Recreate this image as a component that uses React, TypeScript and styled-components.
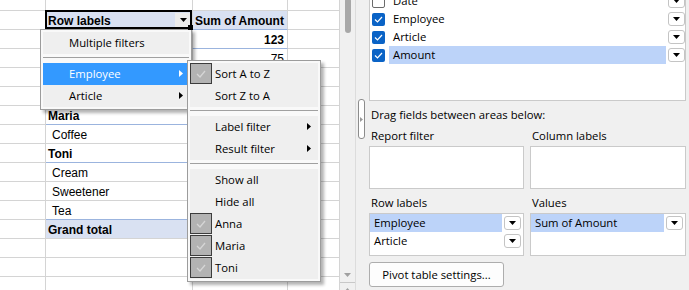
import React from 'react';
import styled, { createGlobalStyle, css } from 'styled-components';

const uiFont = `"Open Sans", "Noto Sans", sans-serif`;
const sheetFont = `"Liberation Sans", Arial, sans-serif`;

const Global = createGlobalStyle`
  html, body { margin: 0; padding: 0; }
  body { width: 689px; height: 290px; overflow: hidden; background: #fff; }
  *, *::before, *::after { box-sizing: border-box; }
`;

const Window = styled.div`
  display: flex;
  width: 689px;
  height: 290px;
  overflow: hidden;
`;

/* ---------------- Spreadsheet ---------------- */

const Sheet = styled.div`
  position: relative;
  width: 340px;
  height: 290px;
  overflow: hidden;
  background: #fff;
  font-family: ${sheetFont};
  font-size: 12px;
  color: #000;
`;

const Grid = styled.div`
  display: grid;
  grid-template-columns: 46px 147px 95px 52px;
  grid-template-rows: 11px;
  grid-auto-rows: 19px;
`;

type Kind = 'blank' | 'header' | 'group' | 'item' | 'total';

const Cell = styled.div<{ $kind: Kind; $col: number; $blue?: boolean; $active?: boolean }>`
  position: relative;
  display: flex;
  align-items: flex-end;
  line-height: 14px;
  padding: 0 2px 1px 2px;
  border-right: 1px solid #d4d4d4;
  border-bottom: 1px solid #d4d4d4;
  white-space: nowrap;
  overflow: visible;
  ${(p) =>
    (p.$col === 1 || p.$col === 2) &&
    css`
      ${p.$blue && 'border-bottom-color: #9bb4de;'}
      ${(p.$kind === 'header' || p.$kind === 'total') && 'background: #d9e1f2;'}
      ${(p.$kind === 'header' || p.$kind === 'total' || p.$kind === 'group') && 'font-weight: bold;'}
    `}
  ${(p) => p.$col === 1 && p.$kind === 'item' && 'padding-left: 6px;'}
  ${(p) => p.$col === 2 && p.$kind !== 'header' && 'justify-content: flex-end; padding-right: 3px;'}
  ${(p) =>
    p.$active &&
    css`
      justify-content: space-between;
      &::after {
        content: '';
        position: absolute;
        top: -1px;
        left: -1px;
        right: 0;
        bottom: 0;
        border: 2px solid #000;
        pointer-events: none;
      }
      &::before {
        content: '';
        position: absolute;
        right: -1px;
        bottom: -1px;
        width: 5px;
        height: 5px;
        background: #000;
        z-index: 1;
      }
    `}
`;

const CellButton = styled.span`
  width: 16px;
  height: 14px;
  margin: 0 -1px 1px 0;
  background: #ececec;
  display: flex;
  align-items: center;
  justify-content: center;
`;

const DownTri = ({ color = '#000' }: { color?: string }) => (
  <svg width="7" height="4" viewBox="0 0 7 4">
    <path d="M0 0H7L3.5 4Z" fill={color} />
  </svg>
);

const RightTri = ({ color = '#000' }: { color?: string }) => (
  <svg width="4" height="7" viewBox="0 0 4 7">
    <path d="M0 0L4 3.5L0 7Z" fill={color} />
  </svg>
);

/* ---------------- Menus ---------------- */

const Menu = styled.div<{ $left: number; $top: number; $width: number }>`
  position: absolute;
  left: ${(p) => p.$left}px;
  top: ${(p) => p.$top}px;
  width: ${(p) => p.$width}px;
  padding: 2px;
  background: #f9f9f9;
  border: 1px solid #9c9c9c;
  box-shadow: 3px 3px 3px rgba(0, 0, 0, 0.3);
  font-family: ${uiFont};
  font-size: 11.3px;
  color: #000;
`;

const MenuGroup = styled.div`
  background: #efefef;
`;

const MenuItem = styled.div<{ $active?: boolean; $gap: number; $arrowGap: number }>`
  display: flex;
  align-items: center;
  height: 22px;
  padding-bottom: 1px;
  white-space: nowrap;
  padding-right: ${(p) => p.$arrowGap}px;
  background: ${(p) => (p.$active ? '#3399ff' : 'transparent')};
  color: ${(p) => (p.$active ? '#fff' : '#000')};
  & > .slot {
    width: 22px;
    height: 21px;
    margin-right: ${(p) => p.$gap}px;
    flex: none;
  }
  & > .arrow {
    margin-left: auto;
    display: flex;
  }
`;

const MenuCheck = styled.span`
  display: flex;
  align-items: center;
  justify-content: center;
  width: 22px;
  height: 21px;
  margin-right: 3px;
  background: #b3b3b3;
  border: 1px solid #3c3c3c;
  flex: none;
`;

const Separator = styled.div`
  height: 9px;
  padding-top: 3px;
  &::after {
    content: '';
    display: block;
    height: 1px;
    background: #a0a0a0;
  }
`;

const CheckMark = () => (
  <svg width="10" height="8" viewBox="0 0 10 8">
    <path d="M1 4L4 7L9 1" stroke="#d6d6d6" strokeWidth="1.3" fill="none" />
  </svg>
);

/* ---------------- Sheet scrollbar ---------------- */

const VScroll = styled.div`
  width: 16px;
  height: 290px;
  background: #f0f0f0;
  border-right: 1px solid #dcdcdc;
  display: flex;
  flex-direction: column;
  align-items: center;
`;

const Thumb = styled.div`
  width: 6px;
  height: 35px;
  margin-top: -2px;
  border-radius: 3px;
  background: #a8a8a8;
`;

const ScrollSpacer = styled.div`
  flex: 1;
`;

const ScrollArrow = styled.div`
  height: 9px;
  display: flex;
  align-items: flex-start;
  justify-content: center;
`;

const ScrollFoot = styled.div`
  width: 100%;
  height: 8px;
  border-top: 1px solid #c8c8c8;
  display: flex;
  justify-content: center;
  padding-top: 5px;
`;

/* ---------------- Right panel ---------------- */

const Panel = styled.div`
  flex: 1;
  display: flex;
  background: #f0f0f0;
  font-family: ${uiFont};
  font-size: 11.3px;
  color: #000;
`;

const SplitCol = styled.div`
  width: 13px;
  padding: 99px 0 0 2px;
`;

const Handle = styled.div`
  width: 7px;
  height: 40px;
  border: 1px solid #8c8c8c;
  border-radius: 3px;
  background: #fff;
  display: flex;
  align-items: center;
  justify-content: center;
`;

const Content = styled.div`
  width: 317px;
  display: flex;
  flex-direction: column;
`;

const ListBox = styled.div`
  height: 101px;
  background: #fff;
  border: 1px solid #cacaca;
  border-top: none;
  overflow: hidden;
`;

const ListInner = styled.div`
  margin-top: -8px;
  padding-left: 2px;
`;

const FieldRow = styled.div`
  display: flex;
  align-items: center;
  height: 18px;
`;

const Check = styled.span<{ $on?: boolean }>`
  width: 13px;
  height: 13px;
  margin-right: 4px;
  border-radius: 2px;
  flex: none;
  display: flex;
  align-items: center;
  justify-content: center;
  ${(p) =>
    p.$on
      ? css`
          background: #0a63c6;
        `
      : css`
          background: #fff;
          border: 1px solid #6b6b6b;
        `}
`;

const FieldLabel = styled.div<{ $sel?: boolean }>`
  flex: 1;
  height: 18px;
  line-height: 18px;
  padding-left: 4px;
  margin-right: 2px;
  white-space: nowrap;
  background: ${(p) => (p.$sel ? '#bcd3f9' : 'transparent')};
`;

const DropButton = styled.span`
  width: 17px;
  height: 14px;
  flex: none;
  border: 1px solid #c4c4c4;
  border-radius: 3px;
  background: #fff;
  display: flex;
  align-items: center;
  justify-content: center;
`;

const Hint = styled.div`
  margin-top: 6px;
  height: 16px;
  line-height: 16px;
  padding-left: 2px;
`;

const Areas = styled.div`
  display: grid;
  grid-template-columns: 155px 156px;
  column-gap: 6px;
`;

const AreaLabel = styled.div<{ $top: number }>`
  margin-top: ${(p) => p.$top}px;
  height: 16px;
  line-height: 16px;
  padding-left: 2px;
`;

const AreaBox = styled.div`
  margin-top: 2px;
  height: 43px;
  background: #fff;
  border: 1px solid #cacaca;
  padding-right: 2px;
`;

const SettingsButton = styled.button`
  margin-top: 6px;
  width: 135px;
  height: 25px;
  padding: 0;
  border: 1px solid #adadad;
  border-radius: 3px;
  background: #fdfdfd;
  font-family: ${uiFont};
  font-size: 11.3px;
  color: #000;
  text-align: center;
`;

const CheckTick = () => (
  <svg width="9" height="7" viewBox="0 0 9 7">
    <path d="M1 3.5L3.5 6L8 1" stroke="#fff" strokeWidth="1.2" fill="none" />
  </svg>
);

/* ---------------- Data ---------------- */

type Row = { kind: Kind; b?: string; c?: string; blue?: boolean };

const rows: Row[] = [
  { kind: 'blank' },
  { kind: 'header', b: 'Row labels', c: 'Sum of Amount', blue: true },
  { kind: 'group', b: 'Anna', c: '123', blue: true },
  { kind: 'item', b: 'Coffee', c: '75' },
  { kind: 'item', b: 'Sweetener', c: '28' },
  { kind: 'item', b: 'Tea', c: '20' },
  { kind: 'group', b: 'Maria', c: '38', blue: true },
  { kind: 'item', b: 'Coffee', c: '38' },
  { kind: 'group', b: 'Toni', c: '59', blue: true },
  { kind: 'item', b: 'Cream', c: '12' },
  { kind: 'item', b: 'Sweetener', c: '17' },
  { kind: 'item', b: 'Tea', c: '30', blue: true },
  { kind: 'total', b: 'Grand total', c: '220' },
  { kind: 'blank' },
  { kind: 'blank' },
  { kind: 'blank' },
];

const fields = [
  { name: 'Date', on: false, sel: false },
  { name: 'Employee', on: true, sel: false },
  { name: 'Article', on: true, sel: false },
  { name: 'Amount', on: true, sel: true },
];

const subGroups: { label: string; checked?: boolean; arrow?: boolean }[][] = [
  [{ label: 'Sort A to Z', checked: true }, { label: 'Sort Z to A' }],
  [
    { label: 'Label filter', arrow: true },
    { label: 'Result filter', arrow: true },
  ],
  [
    { label: 'Show all' },
    { label: 'Hide all' },
    { label: 'Anna', checked: true },
    { label: 'Maria', checked: true },
    { label: 'Toni', checked: true },
  ],
];

export default function App() {
  return (
    <>
      <Global />
      <Window>
        <Sheet>
          <Grid>
            {rows.map((r, i) => (
              <React.Fragment key={i}>
                <Cell $kind={r.kind} $col={0} />
                <Cell $kind={r.kind} $col={1} $blue={r.blue} $active={r.kind === 'header'}>
                  <span>{r.b}</span>
                  {r.kind === 'header' && (
                    <CellButton>
                      <DownTri />
                    </CellButton>
                  )}
                </Cell>
                <Cell $kind={r.kind} $col={2} $blue={r.blue}>
                  {r.c}
                </Cell>
                <Cell $kind={r.kind} $col={3} />
              </React.Fragment>
            ))}
          </Grid>

          <Menu $left={40} $top={29} $width={152}>
            <MenuGroup>
              <MenuItem $gap={4} $arrowGap={6}>
                <span className="slot" />
                Multiple filters
              </MenuItem>
            </MenuGroup>
            <Separator />
            <MenuGroup>
              <MenuItem $active $gap={4} $arrowGap={6}>
                <span className="slot" />
                Employee
                <span className="arrow">
                  <RightTri color="#fff" />
                </span>
              </MenuItem>
              <MenuItem $gap={4} $arrowGap={6}>
                <span className="slot" />
                Article
                <span className="arrow">
                  <RightTri />
                </span>
              </MenuItem>
            </MenuGroup>
          </Menu>

          <Menu $left={187} $top={60} $width={134}>
            {subGroups.map((g, gi) => (
              <React.Fragment key={gi}>
                {gi > 0 && <Separator />}
                <MenuGroup>
                  {g.map((it) => (
                    <MenuItem key={it.label} $gap={3} $arrowGap={7}>
                      {it.checked ? (
                        <MenuCheck>
                          <CheckMark />
                        </MenuCheck>
                      ) : (
                        <span className="slot" />
                      )}
                      {it.label}
                      {it.arrow && (
                        <span className="arrow">
                          <RightTri />
                        </span>
                      )}
                    </MenuItem>
                  ))}
                </MenuGroup>
              </React.Fragment>
            ))}
          </Menu>
        </Sheet>

        <VScroll>
          <Thumb />
          <ScrollSpacer />
          <ScrollArrow>
            <DownTri color="#a0a0a0" />
          </ScrollArrow>
          <ScrollFoot>
            <svg width="7" height="4" viewBox="0 0 7 4">
              <path d="M0 4H7L3.5 0Z" fill="#a0a0a0" />
            </svg>
          </ScrollFoot>
        </VScroll>

        <Panel>
          <SplitCol>
            <Handle>
              <svg width="3" height="5" viewBox="0 0 3 5">
                <path d="M0 0L3 2.5L0 5Z" fill="#9a9a9a" />
              </svg>
            </Handle>
          </SplitCol>
          <Content>
            <ListBox>
              <ListInner>
                {fields.map((f) => (
                  <FieldRow key={f.name}>
                    <Check $on={f.on}>{f.on && <CheckTick />}</Check>
                    <FieldLabel $sel={f.sel}>{f.name}</FieldLabel>
                    <DropButton>
                      <DownTri />
                    </DropButton>
                  </FieldRow>
                ))}
              </ListInner>
            </ListBox>
            <Hint>Drag fields between areas below:</Hint>
            <Areas>
              <div>
                <AreaLabel $top={5}>Report filter</AreaLabel>
                <AreaBox />
              </div>
              <div>
                <AreaLabel $top={5}>Column labels</AreaLabel>
                <AreaBox />
              </div>
              <div>
                <AreaLabel $top={6}>Row labels</AreaLabel>
                <AreaBox>
                  <FieldRow>
                    <FieldLabel $sel>Employee</FieldLabel>
                    <DropButton>
                      <DownTri />
                    </DropButton>
                  </FieldRow>
                  <FieldRow>
                    <FieldLabel>Article</FieldLabel>
                    <DropButton>
                      <DownTri />
                    </DropButton>
                  </FieldRow>
                </AreaBox>
              </div>
              <div>
                <AreaLabel $top={6}>Values</AreaLabel>
                <AreaBox>
                  <FieldRow>
                    <FieldLabel $sel>Sum of Amount</FieldLabel>
                    <DropButton>
                      <DownTri />
                    </DropButton>
                  </FieldRow>
                </AreaBox>
              </div>
            </Areas>
            <div>
              <SettingsButton>Pivot table settings...</SettingsButton>
            </div>
          </Content>
        </Panel>
      </Window>
    </>
  );
}
